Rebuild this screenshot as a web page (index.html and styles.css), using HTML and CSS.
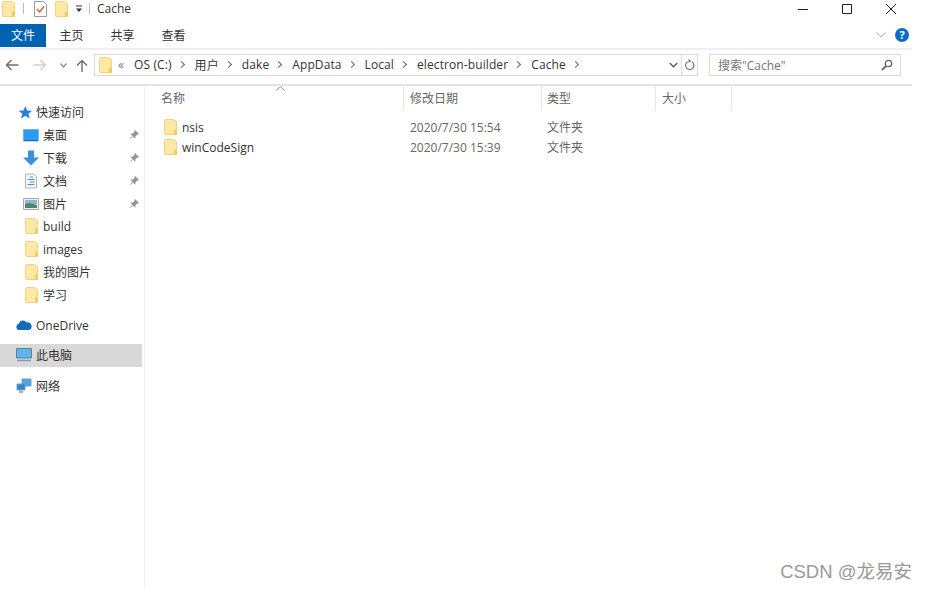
FILE: index.html
```html
<!DOCTYPE html>
<html lang="zh-CN">
<head>
  <meta charset="UTF-8">
  <title>Cache</title>
  <link rel="stylesheet" href="styles.css">
</head>
<body>
  <svg class="defs" width="0" height="0">
    <symbol id="folder" viewBox="0 0 13 16" preserveAspectRatio="none">
      <path d="M.5 1.500q0-1 1-1h8l3 2v13h-11q-1 0-1-1z" fill="#fee8a6" stroke="#f2d27c"/>
      <path d="M10 10.500h3V16h-3z" fill="#f5cc62"/>
    </symbol>
    <symbol id="pin" viewBox="0 0 10 10">
      <path d="M6 0l4 4-1 .6-.7-.2L6.300 6.500 6.500 8 6 8.500 1.500 4 2 3.500l1.500.2L5.600 1.700 5.400 1zM3 6.200L.5 9.500 3.800 7z" fill="#8f959c"/>
    </symbol>
  </svg>

  <!-- 标题栏 -->
  <div class="titlebar">
    <svg width="13" height="16"><use href="#folder"/></svg>
    <span class="qa-sep"></span>
    <svg class="qa-check" width="13" height="16" viewBox="0 0 13 16">
      <path d="M.5.5h9l3 3v12H.5z" fill="#fff" stroke="#9a9a9a"/>
      <path d="M3 8l2.500 3L10 5.500" fill="none" stroke="#e0562f" stroke-width="1.400"/>
    </svg>
    <svg class="qa-folder2" width="13" height="16"><use href="#folder"/></svg>
    <svg class="qa-more" width="8" height="8" viewBox="0 0 8 8">
      <path d="M1 1h6" stroke="#333"/><path d="M1 3.500h6L4 7z" fill="#333"/>
    </svg>
    <span class="qa-sep qa-sep-last"></span>
    <span class="title">Cache</span>
    <div class="winbtns">
      <svg width="12" height="12" viewBox="0 0 12 12"><path d="M1 6.500h10" stroke="#222"/></svg>
      <svg width="12" height="12" viewBox="0 0 12 12"><path d="M1.500 1.500h9v9h-9z" fill="none" stroke="#222"/></svg>
      <svg width="12" height="12" viewBox="0 0 12 12"><path d="M1 1l10 10M11 1L1 11" stroke="#222"/></svg>
    </div>
  </div>

  <!-- 功能区选项卡 -->
  <div class="ribbon">
    <div class="tab tab-file">文件</div>
    <div class="tab">主页</div>
    <div class="tab">共享</div>
    <div class="tab">查看</div>
    <svg class="ribbon-chevron" width="10" height="6" viewBox="0 0 10 6"><path d="M.5.500L5 5 9.500.5" fill="none" stroke="#b5b5b5"/></svg>
    <span class="help">?</span>
  </div>

  <!-- 地址栏 -->
  <div class="navbar">
    <svg class="nav-icon" width="14" height="12" viewBox="0 0 14 12"><path d="M13.500 6H1.500M6.500 1l-5 5 5 5" fill="none" stroke="#6d6d6d" stroke-width="1.400"/></svg>
    <svg class="nav-icon" width="14" height="12" viewBox="0 0 14 12"><path d="M.5 6h12M7.500 1l5 5-5 5" fill="none" stroke="#cfcfcf" stroke-width="1.400"/></svg>
    <svg class="nav-icon" width="7" height="5" viewBox="0 0 7 5"><path d="M.5.500L3.500 4 6.500.5" fill="none" stroke="#8a8a8a" stroke-width="1.200"/></svg>
    <svg class="nav-icon" width="12" height="13" viewBox="0 0 12 13"><path d="M6 13V1.500M1 6.500l5-5 5 5" fill="none" stroke="#6d6d6d" stroke-width="1.400"/></svg>
    <div class="address">
      <svg class="addr-folder" width="13" height="16"><use href="#folder"/></svg>
      <span class="crumb-more">«</span>
      <span>OS (C:)</span><i class="arrow"></i>
      <span>用户</span><i class="arrow"></i>
      <span>dake</span><i class="arrow"></i>
      <span>AppData</span><i class="arrow"></i>
      <span>Local</span><i class="arrow"></i>
      <span>electron-builder</span><i class="arrow"></i>
      <span>Cache</span><i class="arrow"></i>
      <svg class="addr-drop" width="9" height="6" viewBox="0 0 10 6"><path d="M.8.800L5 5 9.200.8" fill="none" stroke="#555" stroke-width="1.400"/></svg>
      <span class="addr-refresh">
        <svg width="11" height="12" viewBox="0 0 11 12"><path d="M6.500 2.200A4.200 4.200 0 1 1 2.500 3.500" transform="rotate(20 5.500 6.500)" fill="none" stroke="#777" stroke-width="1.200"/><path d="M4.500 0v4l3-2z" fill="#777"/></svg>
      </span>
    </div>
    <div class="search">
      <span>搜索"Cache"</span>
      <svg width="12" height="12" viewBox="0 0 12 12"><circle cx="7.500" cy="4.500" r="3.200" fill="none" stroke="#666" stroke-width="1.300"/><path d="M5 7l-4 4" stroke="#666" stroke-width="1.800"/></svg>
    </div>
  </div>

  <div class="rule"></div>

  <div class="content">
    <!-- 导航窗格 -->
    <div class="sidebar">
      <div class="item item-top">
        <svg width="14" height="13" viewBox="0 0 14 13"><path d="M7.500 0l1.700 4.400L14 4.700l-3.600 3 1.200 4.800-4.100-2.700L3 12.500l1.300-4.800-3.800-3 4.900-.3z" fill="#2b7fd6"/></svg>
        <span>快速访问</span>
      </div>
      <div class="item sub">
        <svg width="16" height="13" viewBox="0 0 16 13"><path d="M.5.500h15v11.500H.5z" fill="#2a9df2" stroke="#6cb3e8"/><path d="M1 11.500h14" stroke="#1a6fb5"/></svg>
        <span>桌面</span>
        <svg class="pin" width="10" height="10"><use href="#pin"/></svg>
      </div>
      <div class="item sub">
        <svg width="16" height="16" viewBox="0 0 16 15"><path d="M5 0h6v7h5l-8 8-8-8h5z" fill="#3b8fe0"/></svg>
        <span>下载</span>
        <svg class="pin" width="10" height="10"><use href="#pin"/></svg>
      </div>
      <div class="item sub">
        <svg width="16" height="16" viewBox="0 0 16 15"><path d="M2.500.5h8l3 2.500v11.500h-11z" fill="#f4f4f4" stroke="#b5b5b5"/><path d="M7 3.500h3M4.500 6h7M7 8.500h4.500M4.500 11h7" stroke="#3d9ad6"/></svg>
        <span>文档</span>
        <svg class="pin" width="10" height="10"><use href="#pin"/></svg>
      </div>
      <div class="item sub">
        <svg width="16" height="12" viewBox="0 0 16 12"><path d="M.5.500h15v11H.5z" fill="#eee" stroke="#aaa"/><path d="M2 2h12v4H2z" fill="#8ab7d8"/><path d="M2 6l5-1 7 2v3H2z" fill="#55806b"/></svg>
        <span>图片</span>
        <svg class="pin" width="10" height="10"><use href="#pin"/></svg>
      </div>
      <div class="item sub-folder"><svg width="13" height="16"><use href="#folder"/></svg><span>build</span></div>
      <div class="item sub-folder"><svg width="13" height="16"><use href="#folder"/></svg><span>images</span></div>
      <div class="item sub-folder"><svg width="13" height="16"><use href="#folder"/></svg><span>我的图片</span></div>
      <div class="item sub-folder"><svg width="13" height="16"><use href="#folder"/></svg><span>学习</span></div>
      <div class="item item-group">
        <svg width="16" height="10" viewBox="0 0 16 10"><path d="M3.500 10A3.200 3.200 0 0 1 2.800 3.700 4.200 4.200 0 0 1 10.500 2.500 3.800 3.800 0 0 1 12.800 10z" fill="#0f6cbd"/></svg>
        <span>OneDrive</span>
      </div>
      <div class="item item-group selected">
        <svg width="16" height="14" viewBox="0 0 16 14"><path d="M.5.500h15v9.500H.5z" fill="#5fb4ea" stroke="#5b7f99"/><path d="M1 12.500h14" stroke="#7f9db3" stroke-width="1.500"/></svg>
        <span>此电脑</span>
      </div>
      <div class="item item-group">
        <svg width="16" height="15" viewBox="0 0 16 15"><path d="M6 1h9v7H6z" fill="#4ea6e0" stroke="#7a9db5"/><path d="M1 6h8v6H1z" fill="#2f86cf" stroke="#7a9db5"/><path d="M3 14h4" stroke="#8a9aa5" stroke-width="1.500"/></svg>
        <span>网络</span>
      </div>
    </div>

    <!-- 文件列表 -->
    <div class="files">
      <svg class="sort" width="9" height="5" viewBox="0 0 9 5"><path d="M.5 4.500l4-4 4 4" fill="none" stroke="#999"/></svg>
      <div class="row head">
        <div class="col col-name">名称</div>
        <div class="col col-date">修改日期</div>
        <div class="col col-type">类型</div>
        <div class="col col-size">大小</div>
      </div>
      <div class="row file">
        <div class="col col-name"><svg width="13" height="16"><use href="#folder"/></svg><span>nsis</span></div>
        <div class="col col-date">2020/7/30 15:54</div>
        <div class="col col-type">文件夹</div>
      </div>
      <div class="row file">
        <div class="col col-name"><svg width="13" height="16"><use href="#folder"/></svg><span>winCodeSign</span></div>
        <div class="col col-date">2020/7/30 15:39</div>
        <div class="col col-type">文件夹</div>
      </div>
    </div>
  </div>

  <div class="watermark">CSDN @龙易安</div>
</body>
</html>
```

FILE: styles.css
```css
/* 页面 */
html, body {
  margin: 0;
  padding: 0;
  height: 590px;
  overflow: hidden;
}
body {
  position: relative;
  background-color: #fff;
  color: #222;
  font-family: "Open Sans", "Noto Sans CJK SC", sans-serif;
  font-size: 12px;
}
.defs {
  position: absolute;
}
svg {
  display: block;
  flex: none;
}

/* 标题栏 */
.titlebar {
  display: flex;
  align-items: center;
  height: 17px;
  padding-left: 2px;
}
.qa-sep {
  width: 1px;
  height: 11px;
  margin-left: 8px;
  background-color: #bbb;
}
.qa-check {
  margin-left: 10px;
}
.qa-folder2 {
  margin-left: 8px;
}
.qa-more {
  margin-left: 7px;
}
.qa-sep-last {
  margin-left: 6px;
}
.title {
  margin-left: 7px;
  color: #333;
}
.winbtns {
  display: flex;
  gap: 32px;
  margin-left: auto;
  margin-right: 29px;
}

/* 选项卡 */
.ribbon {
  display: flex;
  align-items: center;
  height: 24px;
  margin-top: 6px;
  width: 912px;
  border-bottom: 2px solid #f0f0f0;
  padding-bottom: 1px;
}
.tab {
  width: 51px;
  text-align: center;
  color: #333;
}
.tab-file {
  width: 46px;
  height: 23px;
  line-height: 23px;
  background-color: #0063b1;
  color: #fff;
}
.ribbon-chevron {
  margin-left: auto;
}
.help {
  width: 14px;
  height: 14px;
  margin-left: 9px;
  margin-right: 3px;
  border-radius: 50%;
  background-color: #0f6cc4;
  color: #fff;
  font-size: 11px;
  font-weight: 700;
  line-height: 14px;
  text-align: center;
}

/* 地址栏 */
.navbar {
  display: flex;
  align-items: center;
  height: 22px;
  margin-top: 4px;
  padding-left: 5px;
}
.nav-icon {
  margin-right: 7px;
}
.nav-icon:nth-child(2) {
  margin-left: 7px;
}
.nav-icon:nth-child(3) {
  margin-left: 6px;
  margin-right: 10px;
}
.nav-icon:nth-child(4) {
  margin-left: -1px;
  margin-right: 6px;
}
.address {
  display: flex;
  align-items: center;
  box-sizing: border-box;
  width: 604px;
  height: 22px;
  padding-bottom: 1px;
  border: 1px solid #d9d9d9;
  color: #333;
  letter-spacing: .1px;
}
.addr-folder {
  margin-left: 4px;
  margin-right: 6px;
}
.crumb-more {
  color: #777;
  margin-right: 10px;
}
.arrow {
  flex: none;
  width: 4px;
  height: 4px;
  margin: 0 11px 0 7px;
  border-top: 1px solid #666;
  border-right: 1px solid #666;
  transform: rotate(45deg);
}
.addr-drop {
  margin-left: auto;
  margin-right: 3px;
}
.addr-refresh {
  display: flex;
  align-items: center;
  height: 20px;
  padding: 0 2px;
  border-left: 1px solid #d9d9d9;
}
.search {
  display: flex;
  align-items: center;
  justify-content: space-between;
  box-sizing: border-box;
  width: 192px;
  height: 22px;
  margin-left: 11px;
  padding: 0 7px 0 8px;
  border: 1px solid #d9d9d9;
  color: #777;
}
.rule {
  width: 912px;
  height: 2px;
  margin-top: 8px;
  background-color: #e3e3e3;
}

/* 主体 */
.content {
  display: flex;
  height: 504px;
}
.sidebar {
  box-sizing: border-box;
  width: 145px;
  padding-top: 15px;
  padding-right: 2px;
  border-right: 1px solid #f2f2f2;
}
.item {
  display: flex;
  align-items: center;
  height: 22.800px;
  color: #333;
}
.item-top {
  padding-left: 18px;
  gap: 4px;
}
.sub {
  padding-left: 23px;
  gap: 4px;
}
.sub-folder {
  padding-left: 25px;
  gap: 5px;
}
.pin {
  margin-left: auto;
  margin-right: 3px;
}
.item-group {
  padding-left: 16px;
  gap: 4px;
}
.sub-folder + .item-group {
  margin-top: 7.500px;
}
.item-group + .item-group {
  margin-top: 7.500px;
}
.selected {
  background-color: #d9d9d9;
}
.files {
  position: relative;
  flex: 1;
}
.sort {
  position: absolute;
  left: 131px;
  top: 0;
}
.row {
  display: flex;
  height: 20px;
  align-items: center;
}
.head {
  height: 25px;
  margin-bottom: 6px;
  color: #555;
}
.head .col {
  height: 25px;
  line-height: 25px;
  border-right: 1px solid #e5e5e5;
}
.col {
  display: flex;
  align-items: center;
  padding-left: 6px;
  box-sizing: border-box;
}
.col-name {
  width: 259px;
  padding-left: 16px;
}
.col-date {
  width: 138px;
  color: #666;
}
.col-type {
  width: 114px;
  padding-left: 5px;
  color: #666;
}
.col-size {
  width: 76px;
  padding-left: 6px;
  color: #666;
}
.head .col-name {
  color: #666;
}
.file .col-name {
  padding-left: 19px;
  gap: 5px;
  color: #333;
}

/* 水印 */
.watermark {
  position: absolute;
  right: 14px;
  top: 557px;
  color: #999;
  font-family: "Liberation Sans", "Noto Sans CJK SC", sans-serif;
  font-size: 18.500px;
}
```
